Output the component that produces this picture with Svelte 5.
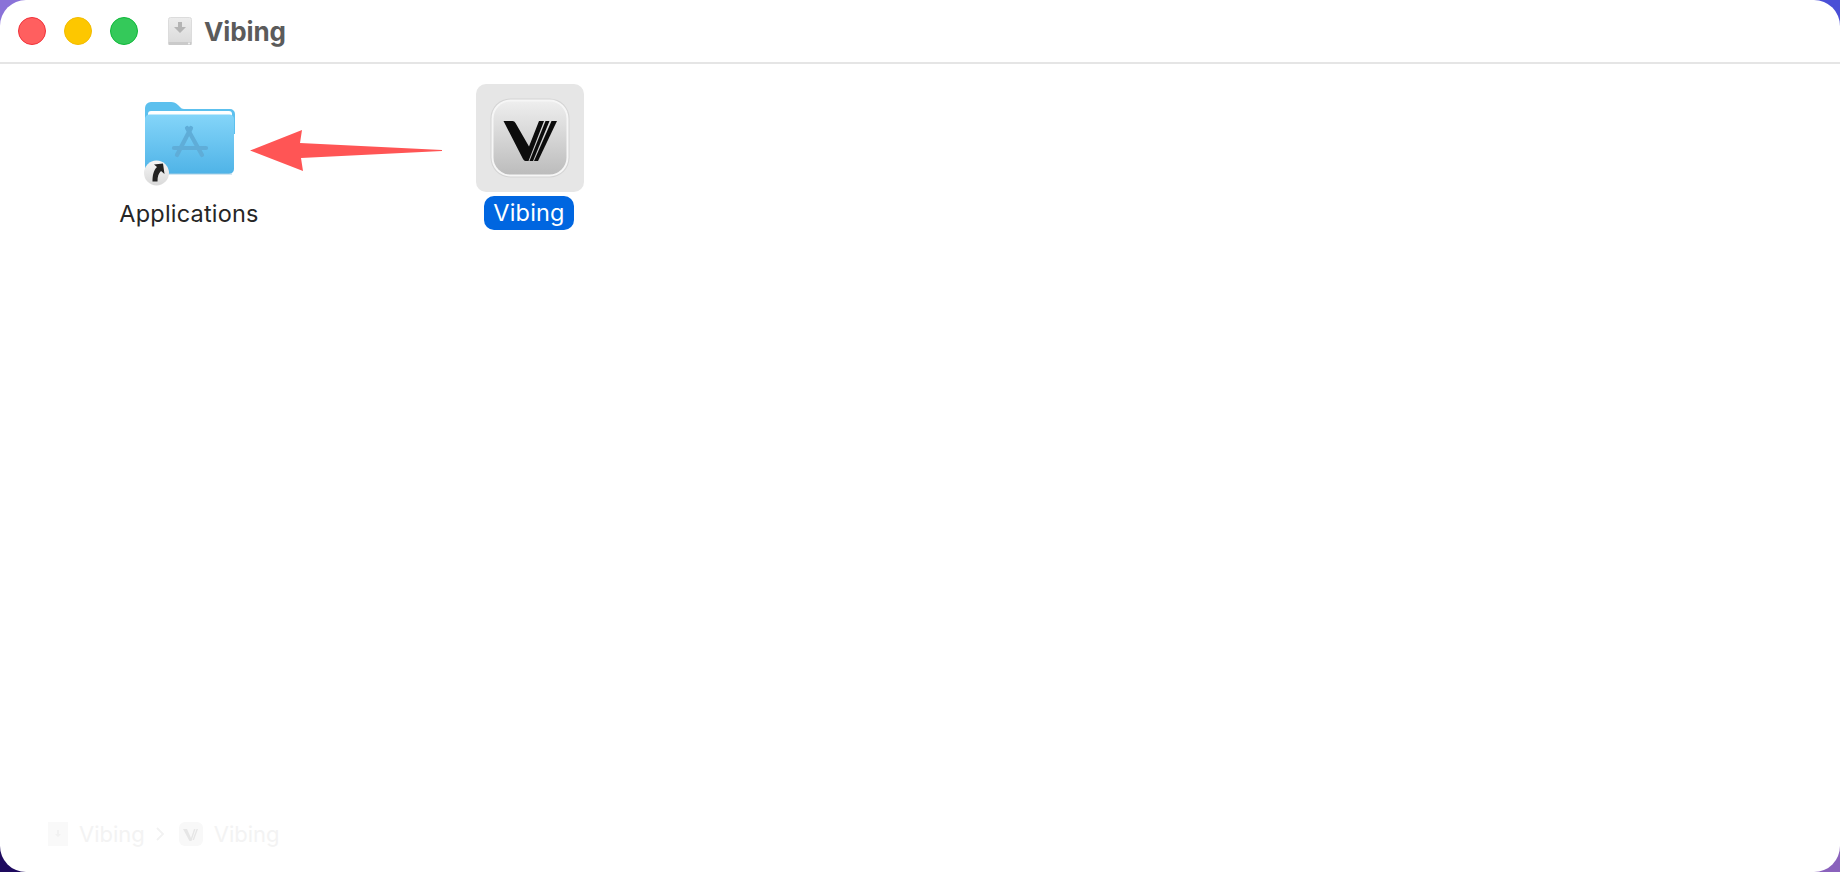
<script lang="ts">
	const title = 'Vibing';
</script>

<div class="desktop">
	<div class="window">
		<header class="titlebar">
			<div class="lights">
				<span class="light close"></span>
				<span class="light minimize"></span>
				<span class="light zoom"></span>
			</div>
			<svg class="disk" viewBox="0 0 24 30" width="24" height="30">
				<defs>
					<linearGradient id="diskFill" x1="0" y1="0" x2="0" y2="1">
						<stop offset="0" stop-color="#ececec" />
						<stop offset="1" stop-color="#dadada" />
					</linearGradient>
				</defs>
				<rect x="0.5" y="0.5" width="23" height="27" rx="2" fill="url(#diskFill)" stroke="#dcdcdc" />
				<rect x="0.5" y="25" width="23" height="3" fill="#cacaca" />
				<circle cx="21" cy="26.5" r="1" fill="#f4f4f4" />
				<path d="M10 5h4v5h4l-6 6-6-6h4z" fill="#b4b4b4" />
			</svg>
			<span class="title">{title}</span>
		</header>

		<main class="icons">
			<figure class="item apps">
				<svg class="folder" viewBox="0 0 92 84" width="92" height="84">
					<defs>
						<linearGradient id="folderFront" x1="0" y1="0" x2="0" y2="1">
							<stop offset="0" stop-color="#84d5f9" />
							<stop offset="1" stop-color="#4fb3e7" />
						</linearGradient>
						<linearGradient id="badgeFill" x1="0" y1="0" x2="0" y2="1">
							<stop offset="0" stop-color="#f6f6f6" />
							<stop offset="1" stop-color="#d9d9d9" />
						</linearGradient>
					</defs>
					<path
						d="M1 6a6 6 0 0 1 6-6h20c3 0 5 1 7 3l2 2c1 1 2 2 4 2h46a5 5 0 0 1 5 5v20H1z"
						fill="#5cc0ee"
					/>
					<path d="M4 12a3 3 0 0 1 3-3h78a3 3 0 0 1 3 3v4H4z" fill="#fff" />
					<path
						d="M1 17a4.500 4.500 0 0 1 4.500-4.500h80A4.500 4.500 0 0 1 90 17v50a5 5 0 0 1-5 5H6a5 5 0 0 1-5-5z"
						fill="url(#folderFront)"
					/>
					<path d="M3 72h85" stroke="#a8cfe4" stroke-width="1" />
					<g stroke="#5fadd8" stroke-width="4.200" stroke-linecap="round" fill="none">
						<path d="M47 26 33 53" />
						<path d="M43 26 58 53" />
						<path d="M30 46h32" />
					</g>
					<circle cx="12.500" cy="71" r="12.500" fill="url(#badgeFill)" />
					<path
						d="M19 61.500 20.500 72l-3.500-3C14.500 71.500 13.500 74.500 13.500 79.500h-5c0-6.500 1-11 4.500-14.500L10 62.500z"
						fill="#222"
					/>
				</svg>
				<figcaption>Applications</figcaption>
			</figure>

			<figure class="item app">
				<div class="selection">
					<svg viewBox="-2 -2 80 80" width="80" height="80">
						<defs>
							<linearGradient id="appFill" x1="0" y1="0" x2="0" y2="1">
								<stop offset="0" stop-color="#eeeeee" />
								<stop offset="1" stop-color="#bcbcbc" />
							</linearGradient>
						</defs>
						<rect x="-1.500" y="-1.500" width="79" height="79" rx="20" fill="#d4d4d4" />
						<rect x="-0.500" y="-0.500" width="77" height="77" rx="19" fill="#f6f6f6" />
						<rect x="1.500" y="1.500" width="73" height="73" rx="17" fill="url(#appFill)" />
						<path
							d="M11.500 21h9q2 0 3 2L37 46.500 47 21h5L36.500 61h-3q-1.500 0-2.500-2z"
							fill="#0c0c0c"
						/>
						<path d="M53.500 21h4L41 61h-3.500z" fill="#0c0c0c" />
						<path d="M59.500 21H65L46 61h-4z" fill="#0c0c0c" />
					</svg>
				</div>
				<figcaption class="selected">Vibing</figcaption>
			</figure>

			<svg class="arrow" viewBox="0 0 200 50" width="200" height="50">
				<path d="M2 21.500 54 1 52 14 194 21v1L53 29l2 13z" fill="#ff5555" />
			</svg>
		</main>

		<footer class="pathbar">
			<svg viewBox="0 0 20 24" width="20" height="24">
				<rect width="20" height="24" fill="#f9f9f9" />
				<path d="M9 8h2v4h2l-3 3-3-3h2z" fill="#f1f1f1" />
			</svg>
			<span>Vibing</span>
			<svg class="sep" viewBox="0 0 8 14" width="8" height="14">
				<path d="M1 1l6 6-6 6" fill="none" stroke="#f2f2f2" stroke-width="1.800" />
			</svg>
			<svg viewBox="0 0 24 24" width="24" height="24">
				<rect width="24" height="24" rx="6" fill="#f8f8f8" />
				<path d="M4 7h4l4 9 3-9h1.500L12.500 19h-2z" fill="#e6e6e6" />
				<path d="M17.500 7H19l-4 11h-1.500z" fill="#e6e6e6" />
			</svg>
			<span>Vibing</span>
		</footer>
	</div>
</div>

<style>
	:global(body) {
		margin: 0;
	}

	/* only the rounded corners of the desktop show through */
	.desktop {
		height: 100vh;
		overflow: hidden;
		background:
			linear-gradient(#8a72d8, #8a72d8) left top / 50% 50% no-repeat,
			linear-gradient(#4a4fd6, #4a4fd6) right top / 50% 50% no-repeat,
			linear-gradient(#1e0a5e, #1e0a5e) left bottom / 50% 50% no-repeat,
			linear-gradient(#8a62bc, #8a62bc) right bottom / 50% 50% no-repeat;
	}

	.window {
		height: 100%;
		display: flex;
		flex-direction: column;
		background: #fff;
		border-radius: 26px;
		overflow: hidden;
		font-family: Inter, 'Liberation Sans', sans-serif;
	}

	.titlebar {
		height: 62px;
		flex-shrink: 0;
		display: flex;
		align-items: center;
		padding-left: 18px;
		border-bottom: 2px solid #e5e5e5;
	}

	.lights {
		display: flex;
		gap: 18px;
		margin-right: 30px;
	}

	.light {
		width: 28px;
		height: 28px;
		border-radius: 50%;
		box-sizing: border-box;
		border: 1px solid transparent;
	}
	.close {
		background: #ff5f5f;
		border-color: #f0323a;
	}
	.minimize {
		background: #fdc700;
		border-color: #f2bb00;
	}
	.zoom {
		background: #34c95a;
		border-color: #0fb83a;
	}

	.disk {
		margin-right: 12px;
		margin-top: 1px;
	}

	.title {
		font-size: 26px;
		font-weight: 700;
		color: #5b5b5b;
		letter-spacing: -0.1px;
	}

	.icons {
		position: relative;
		flex: 1;
		display: flex;
		align-items: flex-start;
		padding: 20px 0 0 120px;
	}

	.item {
		margin: 0;
		display: flex;
		flex-direction: column;
		align-items: center;
	}

	.apps {
		width: 138px;
		padding-top: 18px;
		margin-right: 218px;
	}

	.folder {
		display: block;
		margin-left: 1px;
	}

	figcaption {
		font-size: 23.500px;
		line-height: 34px;
		color: #262626;
		letter-spacing: 0.2px;
		white-space: nowrap;
	}

	.apps figcaption {
		margin-top: 11px;
	}

	.selection {
		width: 108px;
		height: 108px;
		display: flex;
		align-items: center;
		justify-content: center;
		background: #e6e6e6;
		border-radius: 10px;
	}

	figcaption.selected {
		margin-top: 4px;
		margin-right: 2px;
		padding: 0 9px;
		background: #0066e0;
		border-radius: 10px;
		color: #fff;
	}

	.arrow {
		position: absolute;
		left: 248px;
		top: 65px;
	}

	.pathbar {
		height: 48px;
		flex-shrink: 0;
		display: flex;
		align-items: center;
		gap: 11px;
		padding-left: 48px;
		margin-bottom: 14px;
		font-size: 22px;
		color: #f3f3f3;
	}

	.sep {
		margin-right: 4px;
	}
</style>
